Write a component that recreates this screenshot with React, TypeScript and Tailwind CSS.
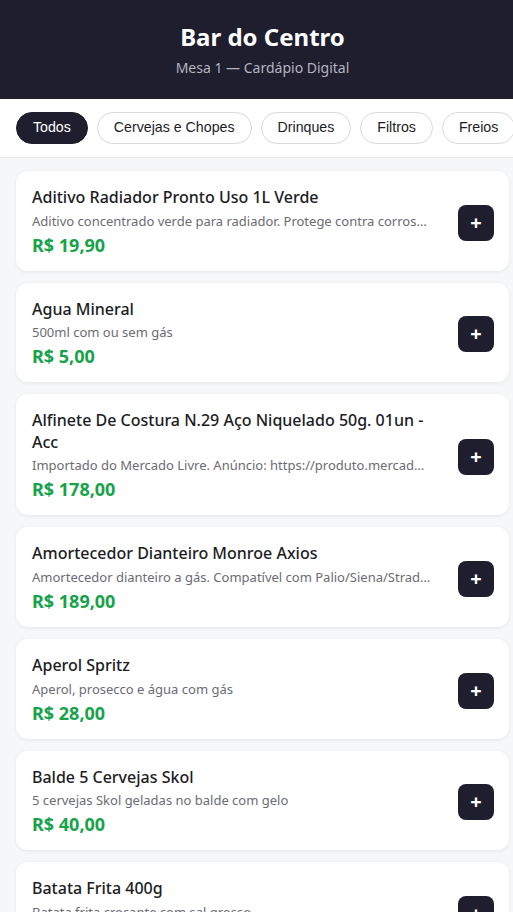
const categories = ['Todos', 'Cervejas e Chopes', 'Drinques', 'Filtros', 'Freios', 'Petiscos'];

interface Product {
  name: string;
  description: string;
  price: string;
}

const products: Product[] = [
  {
    name: 'Aditivo Radiador Pronto Uso 1L Verde',
    description: 'Aditivo concentrado verde para radiador. Protege contra corrosão e superaquecimento.',
    price: 'R$ 19,90',
  },
  { name: 'Agua Mineral', description: '500ml com ou sem gás', price: 'R$ 5,00' },
  {
    name: 'Alfinete De Costura N.29 Aço Niquelado 50g. 01un - Acc',
    description: 'Importado do Mercado Livre. Anúncio: https://produto.mercadolivre.com.br/MLB',
    price: 'R$ 178,00',
  },
  {
    name: 'Amortecedor Dianteiro Monroe Axios',
    description: 'Amortecedor dianteiro a gás. Compatível com Palio/Siena/Strada e Uno.',
    price: 'R$ 189,00',
  },
  { name: 'Aperol Spritz', description: 'Aperol, prosecco e água com gás', price: 'R$ 28,00' },
  { name: 'Balde 5 Cervejas Skol', description: '5 cervejas Skol geladas no balde com gelo', price: 'R$ 40,00' },
  { name: 'Batata Frita 400g', description: 'Batata frita crocante com sal grosso', price: 'R$ 32,00' },
];

function ProductCard({ product }: { product: Product }) {
  return (
    <div className="flex items-center gap-[26px] rounded-xl bg-white pl-4 pr-[15px] pt-4 pb-3 shadow-[0_1px_4px_rgba(0,0,0,0.07)]">
      <div className="min-w-0 flex-1">
        <h3 className="text-[16px] leading-[21.6px] font-medium text-[#1c1c24]">{product.name}</h3>
        <p className="mt-[2px] truncate text-[13px] leading-5 text-[#6b6b73]">{product.description}</p>
        <div className="text-[18px] leading-7 font-bold text-[#16a34a]">{product.price}</div>
      </div>
      <button className="flex h-9 w-9 shrink-0 items-center justify-center rounded-lg bg-[#1e1e2e] text-[20px] leading-none font-bold text-white">
        +
      </button>
    </div>
  );
}

export default function App() {
  return (
    <div className="w-full overflow-hidden">
      <div className="min-h-screen w-[525px] bg-[#f6f7f9] font-['Noto_Sans',sans-serif]">
        <header className="flex h-[99px] flex-col items-center justify-center bg-[#1e1e2e]">
          <h1 className="text-[24px] leading-8 font-bold text-white">Bar do Centro</h1>
          <p className="mt-[5px] text-[14px] leading-5 text-[#b4b4bf]">Mesa 1 — Cardápio Digital</p>
        </header>

        <nav className="flex gap-[9px] overflow-hidden border-b border-[#e8e8ec] bg-white px-4 py-[13px] font-['Liberation_Sans',Arial,sans-serif]">
          {categories.map((c, i) => (
            <button
              key={c}
              className={
                i === 0
                  ? 'h-[32px] shrink-0 rounded-full border border-[#1e1e2e] bg-[#1e1e2e] px-4 text-[14.2px] text-white'
                  : 'h-[32px] shrink-0 rounded-full border border-[#d9d9de] bg-white px-4 text-[14.2px] text-[#1c1c24]'
              }
            >
              {c}
            </button>
          ))}
        </nav>

        <main className="flex flex-col gap-3 px-4 pt-[13px]">
          {products.map((p) => (
            <ProductCard key={p.name} product={p} />
          ))}
        </main>
      </div>
    </div>
  );
}
